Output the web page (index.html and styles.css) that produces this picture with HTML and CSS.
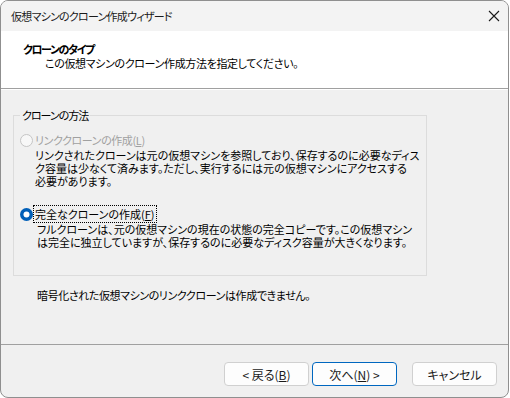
FILE: index.html
```html
<!DOCTYPE html>
<html lang="ja">
<head>
    <meta charset="UTF-8">
    <title>仮想マシンのクローン作成ウィザード</title>
    <link rel="stylesheet" href="styles.css">
</head>
<body>
<div class="window">
    <div class="titlebar">
        <span class="title">仮想マシンのクローン作成ウィザード</span>
        <svg class="close" width="12" height="12" viewBox="0 0 12 12">
            <path d="M1 1 L11 11 M11 1 L1 11" stroke="#1a1a1a" stroke-width="1.1" fill="none"/>
        </svg>
    </div>

    <div class="header">
        <div class="header-title">クローンのタイプ</div>
        <div class="header-sub">この仮想マシンのクローン作成方法を指定してください。</div>
    </div>

    <div class="content">
        <fieldset class="group">
            <legend>クローンの方法</legend>

            <div class="option disabled">
                <svg class="radio" width="13" height="13" viewBox="0 0 13 13">
                    <circle cx="6.5" cy="6.5" r="6" fill="#f7f7f7" stroke="#c4c4c4" stroke-width="1"/>
                </svg>
                <span class="option-label">リンククローンの作成(<u>L</u>)</span>
            </div>
            <p class="desc">リンクされたクローンは元の仮想マシンを参照しており、保存するのに必要なディス<br>ク容量は少なくて済みます。ただし、実行するには元の仮想マシンにアクセスする<br>必要があります。</p>

            <div class="option second">
                <svg class="radio" width="13" height="13" viewBox="0 0 13 13">
                    <circle cx="6.5" cy="6.5" r="6.5" fill="#005fb8"/>
                    <circle cx="6.5" cy="6.5" r="3" fill="#ffffff"/>
                </svg>
                <span class="option-label focused">完全なクローンの作成(<u>F</u>)</span>
            </div>
            <p class="desc full">フルクローンは、元の仮想マシンの現在の状態の完全コピーです。この仮想マシン<br>は完全に独立していますが、保存するのに必要なディスク容量が大きくなります。</p>
        </fieldset>

        <p class="note">暗号化された仮想マシンのリンククローンは作成できません。</p>
    </div>

    <div class="footer">
        <button class="btn">&lt; 戻る(<u>B</u>)</button>
        <button class="btn default">次へ(<u>N</u>) &gt;</button>
        <button class="btn cancel">キャンセル</button>
    </div>
</div>
</body>
</html>
```

FILE: styles.css
```css
body {
    margin: 0;
    background-color: #ffffff;
    font-family: "Noto Sans CJK JP", "Noto Sans", sans-serif;
    font-size: 11px;
    font-feature-settings: "palt";
    color: #000;
}

.window {
    width: 509px;
    height: 398px;
    box-sizing: border-box;
    border: 1px solid #8f8f8f;
    border-radius: 8px;
    overflow: hidden;
    background-color: #f0f0f0;
    display: flex;
    flex-direction: column;
}

.titlebar {
    height: 30px;
    flex: none;
    display: flex;
    align-items: center;
    justify-content: space-between;
    padding: 0 8px 0 10px;
    background-color: #f3f3f3;
}

.title {
    color: #1a1a1a;
    line-height: 14px;
    letter-spacing: -0.75px;
}

.header {
    height: 58px;
    flex: none;
    box-sizing: border-box;
    padding: 11px 0 0 22px;
    background-color: #ffffff;
    border-bottom: 1px solid #a0a0a0;
    line-height: 14px;
    white-space: nowrap;
}

.header-title {
    font-weight: bold;
    letter-spacing: -1.4px;
}

.header-sub {
    margin-left: 22px;
    letter-spacing: -0.35px;
}

.content {
    flex: 1;
    padding: 19px 0 0 12px;
    box-shadow: inset 0 1px 0 #ffffff;
}

.group {
    width: 414px;
    box-sizing: border-box;
    margin: 0;
    padding: 0 0 26px 0;
    border: 1px solid #dcdcdc;
    min-inline-size: 0;
}

.group legend {
    margin-left: 6px;
    padding: 0 2px;
    line-height: 14px;
    letter-spacing: -1px;
}

.option {
    display: flex;
    align-items: center;
    gap: 2px;
    margin: 11px 0 0 6px;
    line-height: 14px;
    white-space: nowrap;
}

.option.second {
    margin-top: 19px;
}

.option.disabled {
    color: #a0a0a0;
    letter-spacing: -0.4px;
}

.radio {
    flex: none;
}

.option-label.focused {
    outline: 1px dotted #000;
    outline-offset: 1px;
}

.desc {
    margin: 2px 0 0 21px;
    line-height: 13px;
    white-space: nowrap;
}

.desc.full {
    margin-left: 23px;
}

.note {
    margin: 12px 0 0 24px;
    line-height: 14px;
    white-space: nowrap;
    letter-spacing: -0.4px;
}

.footer {
    flex: none;
    height: 53px;
    display: flex;
    justify-content: flex-end;
    align-items: flex-start;
    gap: 3px;
    padding: 17px 11px 0 0;
    box-sizing: border-box;
    border-top: 1px solid #a0a0a0;
}

.btn {
    width: 85px;
    height: 24px;
    font-family: inherit;
    font-size: 12px;
    font-feature-settings: "palt";
    color: #1a1a1a;
    background-color: #fdfdfd;
    border: 1px solid #d0d0d0;
    border-radius: 4px;
    padding: 0;
}

.btn.default {
    border: 1px solid #0067c0;
}

.btn.cancel {
    margin-left: 12px;
}
```
